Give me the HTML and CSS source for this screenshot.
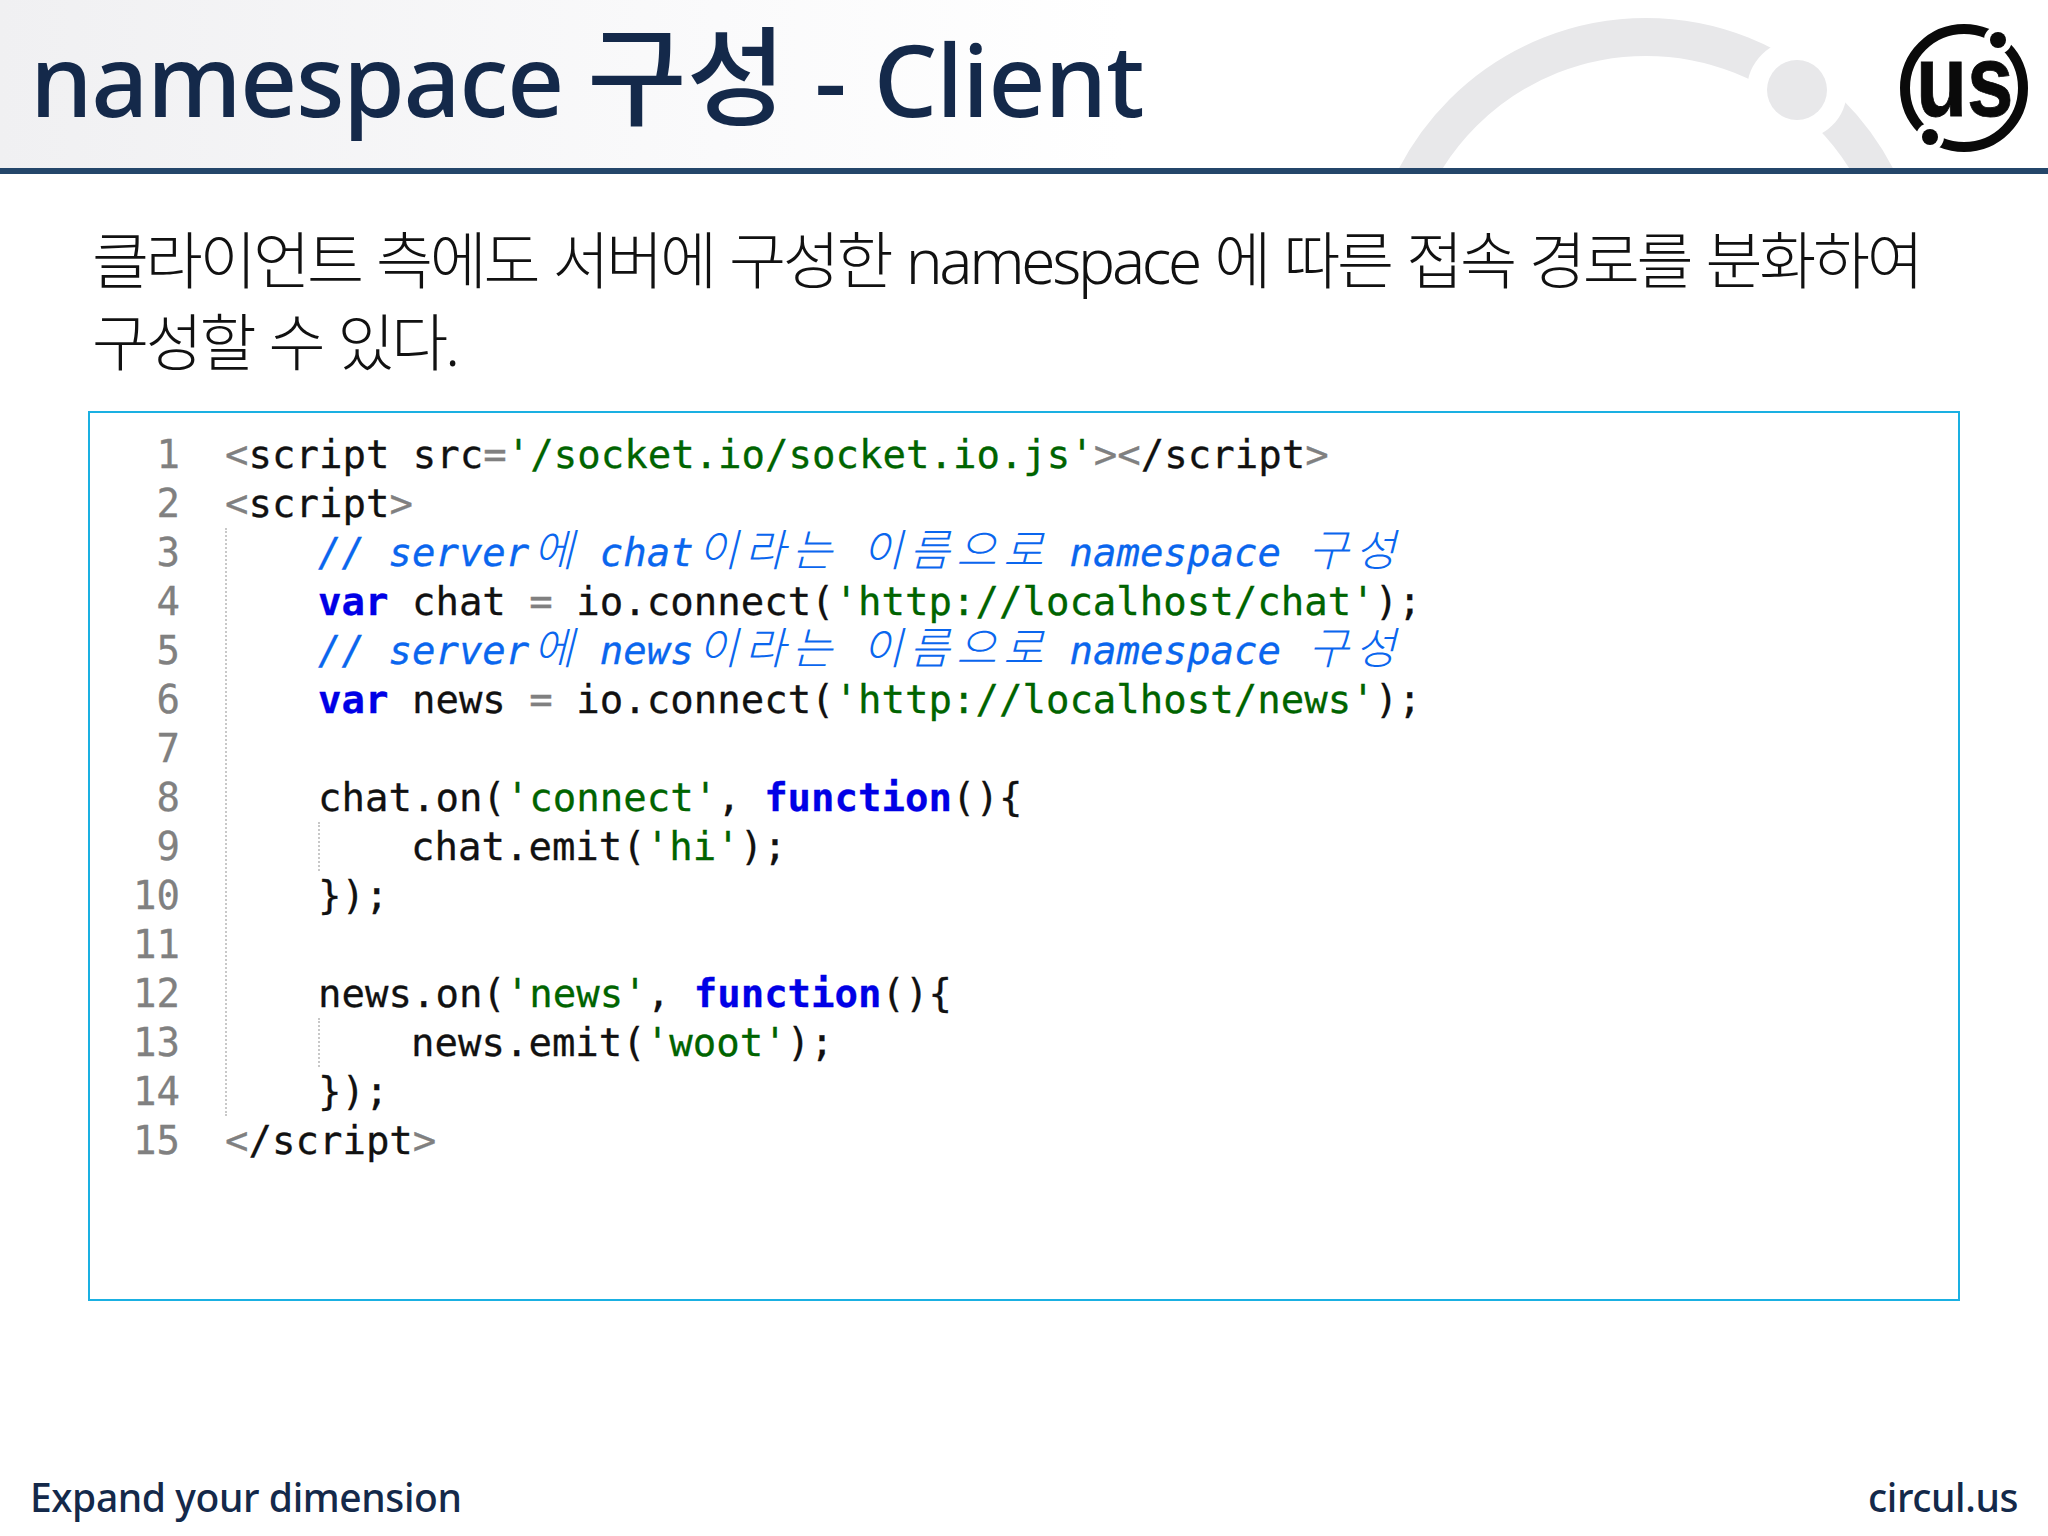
FILE: index.html
```html
<!DOCTYPE html>
<html lang="ko">
<head>
<meta charset="utf-8">
<title>namespace 구성 - Client</title>
<link rel="stylesheet" href="styles.css">
</head>
<body>
<div class="slide">
  <header class="header">
    <svg class="arc" viewBox="0 0 2048 168" aria-hidden="true">
      <circle class="arc-ring" cx="1646" cy="296" r="259"/>
      <circle class="arc-gap" cx="1797" cy="90" r="50"/>
      <circle class="arc-dot" cx="1797" cy="90" r="30"/>
    </svg>
    <h1 class="title">namespace <span class="title-ko">구성</span> - <span class="title-end">Client</span></h1>
    <svg class="logo" viewBox="0 0 130 130" aria-label="us">
      <circle class="logo-ring" cx="65" cy="65" r="59"/>
      <circle class="logo-gap" cx="99" cy="17" r="14"/>
      <circle class="logo-gap" cx="31" cy="114" r="14"/>
      <circle class="logo-dot" cx="99" cy="17" r="8"/>
      <circle class="logo-dot" cx="31" cy="114" r="8"/>
      <text class="logo-text" transform="translate(17 93) scale(.82 1)">us</text>
    </svg>
  </header>
  <main class="main">
    <p class="lead">클라이언트 측에도 서버에 구성한 namespace 에 따른 접속 경로를 분화하여 구성할 수 있다.</p>
    <section class="code">
      <div class="gutter">
        <div>1</div><div>2</div><div>3</div><div>4</div><div>5</div><div>6</div><div>7</div><div>8</div><div>9</div><div>10</div><div>11</div><div>12</div><div>13</div><div>14</div><div>15</div>
      </div>
      <div class="src">
        <div class="ln"><span class="g">&lt;</span>script src<span class="g">=</span><span class="s">'/socket.io/socket.io.js'</span><span class="g">&gt;&lt;</span>/script<span class="g">&gt;</span></div>
        <div class="ln"><span class="g">&lt;</span>script<span class="g">&gt;</span></div>
        <div class="guide outer">
          <div class="ln"><span class="c">// server<span class="ko">에</span> chat<span class="ko">이라는</span> <span class="ko">이름으로</span> namespace <span class="ko">구성</span></span></div>
          <div class="ln"><span class="k">var</span> chat <span class="g">=</span> io.connect(<span class="s">'http://localhost/chat'</span>);</div>
          <div class="ln"><span class="c">// server<span class="ko">에</span> news<span class="ko">이라는</span> <span class="ko">이름으로</span> namespace <span class="ko">구성</span></span></div>
          <div class="ln"><span class="k">var</span> news <span class="g">=</span> io.connect(<span class="s">'http://localhost/news'</span>);</div>
          <div class="ln"></div>
          <div class="ln">chat.on(<span class="s">'connect'</span>, <span class="k">function</span>(){</div>
          <div class="guide inner"><div class="ln">chat.emit(<span class="s">'hi'</span>);</div></div>
          <div class="ln">});</div>
          <div class="ln"></div>
          <div class="ln">news.on(<span class="s">'news'</span>, <span class="k">function</span>(){</div>
          <div class="guide inner"><div class="ln">news.emit(<span class="s">'woot'</span>);</div></div>
          <div class="ln">});</div>
        </div>
        <div class="ln"><span class="g">&lt;</span>/script<span class="g">&gt;</span></div>
      </div>
    </section>
  </main>
  <footer class="footer">
    <span>Expand your dimension</span>
    <span>circul.us</span>
  </footer>
</div>
</body>
</html>
```
FILE: styles.css
```css
* { box-sizing: border-box; }
html, body { margin: 0; padding: 0; background: #fff; }
.slide {
  width: 2048px;
  height: 1536px;
  display: flex;
  flex-direction: column;
  font-family: "Noto Sans", "Noto Sans CJK KR", sans-serif;
  overflow: hidden;
}
.header {
  position: relative;
  height: 174px;
  flex: none;
  display: flex;
  align-items: flex-start;
  justify-content: space-between;
  padding: 0 19px 0 30px;
  border-bottom: 6px solid #24466a;
  background: linear-gradient(90deg, #f0f0f2 0%, #fafafb 35%, #ffffff 55%);
}
.arc {
  position: absolute;
  left: 0;
  top: 0;
  width: 2048px;
  height: 168px;
}
.arc-ring { fill: none; stroke: #e8e8ea; stroke-width: 38; }
.arc-gap { fill: #fff; }
.arc-dot { fill: #e8e8ea; }
.title {
  position: relative;
  margin: 0;
  padding-top: 10px;
  font-size: 100px;
  line-height: 136px;
  font-weight: 500;
  letter-spacing: -1.5px;
  word-spacing: 4px;
  color: #14294a;
  white-space: nowrap;
}
.title-ko {
  font-size: 108px;
  line-height: 100px;
  letter-spacing: 0;
  margin-left: -4px;
}
.title-end {
  letter-spacing: -1px;
}
.logo {
  position: relative;
  width: 130px;
  height: 130px;
  margin-top: 23px;
  flex: none;
}
.logo-ring { fill: none; stroke: #0a0a0a; stroke-width: 10; }
.logo-gap { fill: #fff; }
.logo-dot { fill: #0a0a0a; }
.logo-text {
  font-family: "Liberation Sans", sans-serif;
  font-weight: 700;
  font-size: 102px;
  fill: #0a0a0a;
  stroke: #0a0a0a;
  stroke-width: .8px;
}
.main {
  flex: 1;
  padding: 0 88px;
  min-height: 0;
}
.lead {
  margin: 0;
  padding: 45px 0 0 4px;
  font-size: 62px;
  line-height: 82px;
  font-weight: 300;
  letter-spacing: -3.3px;
  word-spacing: 2.5px;
  color: #111;
}
.code {
  display: flex;
  height: 890px;
  margin-top: 28px;
  padding-top: 17px;
  border: 2px solid #1ab0e2;
  font-family: "DejaVu Sans Mono", monospace;
  font-size: 39px;
  line-height: 49px;
  color: #111;
  -webkit-text-stroke: .3px currentColor;
}
.gutter {
  width: 90px;
  flex: none;
  text-align: right;
  color: #808080;
}
.src {
  margin-left: 45px;
  flex: 1;
}
.ln { height: 49px; white-space: pre; }
.guide { border-left: 2px dotted #c8c8c8; }
.outer { padding-left: 91px; }
.inner { padding-left: 91px; }
.g { color: #808080; }
.s { color: #006400; }
.k { color: #0000e6; font-weight: 700; }
.c { color: #0a66ee; font-style: italic; }
.ko {
  font-family: "Noto Sans CJK KR", sans-serif;
  font-size: 44px;
  letter-spacing: 6.5px;
  line-height: 0;
  font-weight: 300;
  margin-left: 4px;
  margin-right: -4px;
  -webkit-text-stroke: 0;
}
.footer {
  flex: none;
  display: flex;
  justify-content: space-between;
  padding: 0 30px;
  height: 67px;
  font-size: 39px;
  line-height: 56px;
  font-weight: 500;
  letter-spacing: -.4px;
  color: #14294a;
}
```
